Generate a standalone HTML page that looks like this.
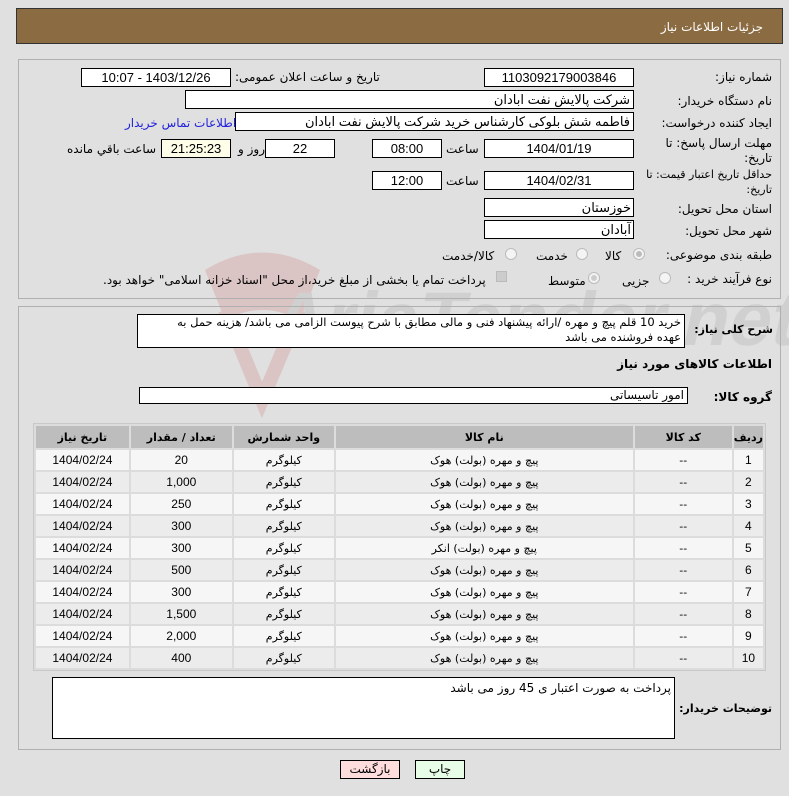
<!DOCTYPE html>
<html><head><meta charset="utf-8"><style>
*{box-sizing:border-box;margin:0;padding:0}
body{width:789px;height:796px;background:#e0e0e0;font-family:"DejaVu Sans","Liberation Sans",sans-serif;font-size:12px;color:#000;position:relative;overflow:hidden;direction:rtl}
.a{position:absolute;white-space:nowrap}
.b{position:absolute;background:#fff;border:1px solid #000;height:19px;line-height:17px;font-size:13px;text-align:center;font-family:"Liberation Sans","DejaVu Sans",sans-serif;overflow:hidden;white-space:nowrap}
.l{position:absolute;white-space:nowrap;font-size:12px}
.panel{position:absolute;border:1px solid #b0b0b0}
table{position:absolute;left:33px;top:423px;width:733px;border-collapse:separate;border-spacing:2px;background:#dcdcdc;border:1px solid #c8c8c8;font-size:11px}
td,th{text-align:center;height:20px;padding:0}
th{background:#bdbdbd;height:22px;font-weight:bold}
tr:nth-child(even) td{background:#f6f6f6}
tr:nth-child(odd) td{background:#ececec}
td.n{font-family:"Liberation Sans",sans-serif;font-size:12px}
.rad{position:absolute;width:12px;height:12px;border-radius:50%;border:1px solid #bbb;background:#f4f4f4}
</style></head><body>
<svg style="position:absolute;left:0;top:0" width="789" height="796">
<g opacity="0.14"><path d="M205 270 Q262 235 320 270 L300 320 Q262 300 225 320 Z" fill="#c02020"/><path d="M225 310 L262 400 L300 310" fill="none" stroke="#c02020" stroke-width="14"/>
<text x="340" y="345" font-size="76" font-family="Liberation Sans" font-weight="bold" fill="#777" direction="ltr" transform="skewX(-12)">AriaTender.net</text></g>
</svg>
<div class="a" style="left:16px;top:8px;width:767px;height:36px;background:#8b6b41;border:1px solid #333"></div>
<div class="a" style="right:26px;top:20px;color:#fff;font-size:12px">جزئیات اطلاعات نیاز</div>

<div class="panel" style="left:18px;top:59px;width:763px;height:240px"></div>
<div class="l" style="right:17px;top:70px">شماره نیاز:</div>
<div class="b" style="left:484px;top:68px;width:150px">1103092179003846</div>
<div class="l" style="left:235px;top:70px">تاریخ و ساعت اعلان عمومی:</div>
<div class="b" style="left:81px;top:68px;width:150px">1403/12/26 - 10:07</div>
<div class="l" style="right:17px;top:94px">نام دستگاه خریدار:</div>
<div class="b" style="left:185px;top:90px;width:449px;text-align:right;padding-right:3px">شرکت پالایش نفت ابادان</div>
<div class="l" style="right:17px;top:116px">ایجاد کننده درخواست:</div>
<div class="b" style="left:235px;top:112px;width:399px;text-align:right;padding-right:3px">فاطمه شش بلوکی کارشناس خرید شرکت پالایش نفت ابادان</div>
<div class="l" style="left:125px;top:116px;color:#2222dd">اطلاعات تماس خریدار</div>
<div class="l" style="right:17px;top:136px;line-height:15px">مهلت ارسال پاسخ: تا<br>تاریخ:</div>
<div class="b" style="left:484px;top:139px;width:150px">1404/01/19</div>
<div class="l" style="left:446px;top:142px">ساعت</div>
<div class="b" style="left:372px;top:139px;width:70px">08:00</div>
<div class="b" style="left:265px;top:139px;width:70px">22</div>
<div class="l" style="left:238px;top:142px">روز و</div>
<div class="b" style="left:161px;top:139px;width:70px;background:#fdfde8">21:25:23</div>
<div class="l" style="left:67px;top:142px">ساعت باقي مانده</div>
<div class="l" style="right:17px;top:167px;line-height:15px;font-size:11px">حداقل تاریخ اعتبار قیمت: تا<br>تاریخ:</div>
<div class="b" style="left:484px;top:171px;width:150px">1404/02/31</div>
<div class="l" style="left:446px;top:174px">ساعت</div>
<div class="b" style="left:372px;top:171px;width:70px">12:00</div>
<div class="l" style="right:17px;top:202px">استان محل تحویل:</div>
<div class="b" style="left:484px;top:198px;width:150px;text-align:right;padding-right:2px">خوزستان</div>
<div class="l" style="right:17px;top:224px">شهر محل تحویل:</div>
<div class="b" style="left:484px;top:220px;width:150px;text-align:right;padding-right:2px">آبادان</div>
<div class="l" style="right:17px;top:248px">طبقه بندی موضوعی:</div>
<div class="rad" style="left:633px;top:248px"><div style="margin:2px;width:6px;height:6px;border-radius:50%;background:#bbb"></div></div>
<div class="l" style="left:605px;top:249px">کالا</div>
<div class="rad" style="left:576px;top:248px"></div>
<div class="l" style="left:536px;top:249px">خدمت</div>
<div class="rad" style="left:505px;top:248px"></div>
<div class="l" style="left:442px;top:249px">کالا/خدمت</div>
<div class="l" style="right:17px;top:272px">نوع فرآیند خرید :</div>
<div class="rad" style="left:659px;top:272px"></div>
<div class="l" style="left:622px;top:274px">جزیی</div>
<div class="rad" style="left:588px;top:272px"><div style="margin:2px;width:6px;height:6px;border-radius:50%;background:#ccc"></div></div>
<div class="l" style="left:548px;top:274px">متوسط</div>
<div class="a" style="left:496px;top:271px;width:11px;height:11px;background:#ccc;border:1px solid #bbb"></div>
<div class="l" style="left:103px;top:273px">پرداخت تمام یا بخشی از مبلغ خرید،از محل "اسناد خزانه اسلامی" خواهد بود.</div>

<div class="panel" style="left:18px;top:306px;width:763px;height:444px"></div>
<div class="l" style="right:16px;top:323px;font-weight:bold;font-size:11px">شرح کلی نیاز:</div>
<div class="b" style="left:137px;top:314px;width:548px;height:34px;text-align:right;padding-right:3px;line-height:15px;font-size:11.5px;font-family:'DejaVu Sans',sans-serif">خرید 10 قلم پیچ و مهره /ارائه پیشنهاد فنی و مالی مطابق با شرح پیوست الزامی می باشد/ هزینه حمل به<br>عهده فروشنده می باشد</div>
<div class="l" style="right:17px;top:357px;font-weight:bold">اطلاعات کالاهای مورد نیاز</div>
<div class="l" style="right:17px;top:390px;font-weight:bold">گروه کالا:</div>
<div class="b" style="left:139px;top:387px;width:549px;height:17px;text-align:right;padding-right:3px;line-height:15px;font-size:12px;font-family:'DejaVu Sans',sans-serif">امور تاسیساتی</div>

<table>
<tr><th style="width:24px">ردیف</th><th style="width:97px">کد کالا</th><th style="width:297px">نام کالا</th><th style="width:100px">واحد شمارش</th><th style="width:101px">تعداد / مقدار</th><th>تاریخ نیاز</th></tr>
<tr><td class="n">1</td><td>--</td><td>پیچ و مهره (بولت) هوک</td><td>کیلوگرم</td><td class="n">20</td><td class="n">1404/02/24</td></tr>
<tr><td class="n">2</td><td>--</td><td>پیچ و مهره (بولت) هوک</td><td>کیلوگرم</td><td class="n">1,000</td><td class="n">1404/02/24</td></tr>
<tr><td class="n">3</td><td>--</td><td>پیچ و مهره (بولت) هوک</td><td>کیلوگرم</td><td class="n">250</td><td class="n">1404/02/24</td></tr>
<tr><td class="n">4</td><td>--</td><td>پیچ و مهره (بولت) هوک</td><td>کیلوگرم</td><td class="n">300</td><td class="n">1404/02/24</td></tr>
<tr><td class="n">5</td><td>--</td><td>پیچ و مهره (بولت) انکر</td><td>کیلوگرم</td><td class="n">300</td><td class="n">1404/02/24</td></tr>
<tr><td class="n">6</td><td>--</td><td>پیچ و مهره (بولت) هوک</td><td>کیلوگرم</td><td class="n">500</td><td class="n">1404/02/24</td></tr>
<tr><td class="n">7</td><td>--</td><td>پیچ و مهره (بولت) هوک</td><td>کیلوگرم</td><td class="n">300</td><td class="n">1404/02/24</td></tr>
<tr><td class="n">8</td><td>--</td><td>پیچ و مهره (بولت) هوک</td><td>کیلوگرم</td><td class="n">1,500</td><td class="n">1404/02/24</td></tr>
<tr><td class="n">9</td><td>--</td><td>پیچ و مهره (بولت) هوک</td><td>کیلوگرم</td><td class="n">2,000</td><td class="n">1404/02/24</td></tr>
<tr><td class="n">10</td><td>--</td><td>پیچ و مهره (بولت) هوک</td><td>کیلوگرم</td><td class="n">400</td><td class="n">1404/02/24</td></tr>
</table>

<div class="l" style="right:17px;top:702px;font-weight:bold;font-size:11px">توضیحات خریدار:</div>
<div class="b" style="left:52px;top:677px;width:623px;height:62px;text-align:right;padding-right:3px;line-height:20px;font-size:12px;font-family:'DejaVu Sans',sans-serif">پرداخت به صورت اعتبار ی 45 روز می باشد</div>

<div class="b" style="left:340px;top:760px;width:60px;height:19px;background:#fdd;font-size:12px;font-family:'DejaVu Sans',sans-serif">بازگشت</div>
<div class="b" style="left:415px;top:760px;width:50px;height:19px;background:#e8fde8;font-size:12px;font-family:'DejaVu Sans',sans-serif">چاپ</div>
</body></html>
